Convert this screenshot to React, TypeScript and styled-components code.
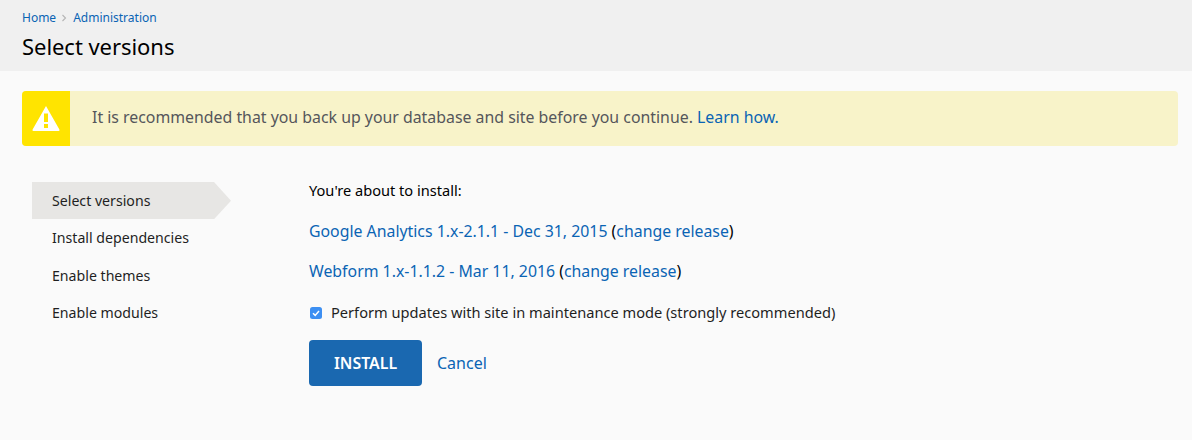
import React from 'react'
import styled, { createGlobalStyle } from 'styled-components'

const GlobalStyle = createGlobalStyle`
  html, body {
    margin: 0;
    padding: 0;
    background: #fafafa;
    color: #000;
    font-family: "Noto Sans", "Open Sans", sans-serif;
  }
  a {
    color: #0a64b4;
    text-decoration: none;
  }
`

const Page = styled.div`
  width: 1192px;
  height: 440px;
  overflow: hidden;
  background: #fafafa;
`

const Header = styled.header`
  height: 71px;
  box-sizing: border-box;
  padding: 9px 22px 0;
  background: #f0f0f0;
`

const Breadcrumb = styled.nav`
  display: flex;
  align-items: center;
  height: 18px;
  font-size: 12px;
`

const Crumb = styled.a`
  line-height: 18px;
`

const CrumbSep = styled.svg`
  width: 6px;
  height: 8px;
  margin: 0 6px 0 5px;
`

const Title = styled.h1`
  margin: 3px 0 0;
  font-size: 22px;
  font-weight: 400;
  line-height: 32px;
  letter-spacing: -0.05px;
  color: #000;
`

const Alert = styled.div`
  display: flex;
  align-items: center;
  height: 55px;
  margin: 20px 14px 0 22px;
  background: #f8f3c9;
  border-radius: 4px;
  overflow: hidden;
`

const AlertIcon = styled.div`
  display: flex;
  align-items: center;
  justify-content: center;
  flex: 0 0 48px;
  height: 100%;
  background: #ffe400;
`

const AlertText = styled.p`
  margin: -3px 0 0 22px;
  font-size: 15.86px;
  color: #55565b;
`

const Body = styled.div`
  display: flex;
  padding: 36px 0 0 32px;
`

const Steps = styled.ol`
  display: flex;
  flex-direction: column;
  flex: 0 0 277px;
  margin: 0;
  padding: 0;
  list-style: none;
`

const Step = styled.li<{ $active?: boolean }>`
  display: flex;
  align-items: center;
  box-sizing: border-box;
  width: 199px;
  height: 37.3px;
  padding-left: 20px;
  font-size: 14.15px;
  color: #1f1f1f;
  background: ${p => (p.$active ? '#e7e6e4' : 'transparent')};
  clip-path: ${p => (p.$active ? 'polygon(0 0, 182px 0, 100% 50%, 182px 100%, 0 100%)' : 'none')};
`

const Content = styled.main`
  display: flex;
  flex-direction: column;
  align-items: flex-start;
`

const Intro = styled.p`
  margin: -2px 0 0;
  font-size: 14.6px;
  line-height: 20px;
  color: #000;
  height: 20px;
`

const Release = styled.p`
  margin: 21px 0 0;
  font-size: 15.85px;
  line-height: 20px;
  color: #000;

  & + & {
    margin-top: 20px;
  }
`

const Maintenance = styled.label`
  display: flex;
  align-items: center;
  margin: 21px 0 0;
  font-size: 14.62px;
  line-height: 20px;
  color: #1f1f1f;
`

const Check = styled.svg`
  width: 12px;
  height: 12px;
  margin: 1px 9px 0 1px;
`

const Actions = styled.div`
  display: flex;
  align-items: center;
  margin-top: 18px;
`

const InstallButton = styled.button`
  width: 113px;
  height: 46px;
  padding: 0;
  border: 0;
  border-radius: 4px;
  background: #1a68b0;
  color: #fff;
  font-family: inherit;
  font-size: 15.9px;
  font-weight: 600;
`

const CancelLink = styled.a`
  margin-left: 15px;
  font-size: 16px;
`

const steps = ['Select versions', 'Install dependencies', 'Enable themes', 'Enable modules']

const App: React.FC = () => {
  return (
    <Page>
      <GlobalStyle />
      <Header>
        <Breadcrumb>
          <Crumb href="#">Home</Crumb>
          <CrumbSep viewBox="0 0 6 8">
            <path d="M1.5 1l3 3-3 3" fill="none" stroke="#b5b5b5" strokeWidth="1.1" />
          </CrumbSep>
          <Crumb href="#">Administration</Crumb>
        </Breadcrumb>
        <Title>Select versions</Title>
      </Header>
      <Alert>
        <AlertIcon>
          <svg width="28" height="27" viewBox="0 0 28 27">
            <path
              fillRule="evenodd"
              fill="#fff"
              d="M14 1 L27.4 24.4 Q28 26 26.4 26 L1.6 26 Q0 26 .6 24.4 Z M12 8.5 V17 H16 V8.5 Z M12 19 V23 H16 V19 Z"
            />
          </svg>
        </AlertIcon>
        <AlertText>
          It is recommended that you back up your database and site before you continue. <a href="#">Learn how.</a>
        </AlertText>
      </Alert>
      <Body>
        <Steps>
          {steps.map((s, i) => (
            <Step key={s} $active={i === 0}>{s}</Step>
          ))}
        </Steps>
        <Content>
          <Intro>You're about to install:</Intro>
          <Release>
            <a href="#">Google Analytics 1.x-2.1.1 - Dec 31, 2015</a> (<a href="#">change release</a>)
          </Release>
          <Release>
            <a href="#">Webform 1.x-1.1.2 - Mar 11, 2016</a> (<a href="#">change release</a>)
          </Release>
          <Maintenance>
            <Check viewBox="0 0 12 12">
              <rect width="12" height="12" rx="2.5" fill="#3d8ff2" />
              <path d="M3 6.2l2.2 2.2L9 4" fill="none" stroke="#fff" strokeWidth="1.5" />
            </Check>
            Perform updates with site in maintenance mode (strongly recommended)
          </Maintenance>
          <Actions>
            <InstallButton>INSTALL</InstallButton>
            <CancelLink href="#">Cancel</CancelLink>
          </Actions>
        </Content>
      </Body>
    </Page>
  )
}

export default App
